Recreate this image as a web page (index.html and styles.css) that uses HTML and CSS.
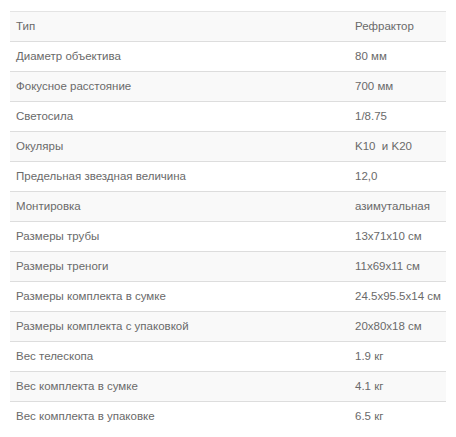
FILE: index.html
```html
<!DOCTYPE html>
<html lang="ru">
<head>
<meta charset="utf-8">
<link rel="stylesheet" href="styles.css">
</head>
<body>
<table class="specs">
<tbody>
<tr><td class="name">Тип</td><td class="val">Рефрактор</td></tr>
<tr><td class="name">Диаметр объектива</td><td class="val">80 мм</td></tr>
<tr><td class="name">Фокусное расстояние</td><td class="val">700 мм</td></tr>
<tr><td class="name">Светосила</td><td class="val">1/8.75</td></tr>
<tr><td class="name">Окуляры</td><td class="val">K10&nbsp; и K20</td></tr>
<tr><td class="name">Предельная звездная величина</td><td class="val">12,0</td></tr>
<tr><td class="name">Монтировка</td><td class="val">азимутальная</td></tr>
<tr><td class="name">Размеры трубы</td><td class="val">13x71x10 см</td></tr>
<tr><td class="name">Размеры треноги</td><td class="val">11x69x11 см</td></tr>
<tr><td class="name">Размеры комплекта в сумке</td><td class="val">24.5x95.5x14 см</td></tr>
<tr><td class="name">Размеры комплекта с упаковкой</td><td class="val">20x80x18 см</td></tr>
<tr><td class="name">Вес телескопа</td><td class="val">1.9 кг</td></tr>
<tr><td class="name">Вес комплекта в сумке</td><td class="val">4.1 кг</td></tr>
<tr><td class="name">Вес комплекта в упаковке</td><td class="val">6.5 кг</td></tr>
</tbody>
</table>
</body>
</html>
```
FILE: styles.css
```css
html, body {
  margin: 0;
  padding: 0;
  background: #fff;
}
body {
  padding: 11px 10px 0 10px;
  font-family: "Liberation Sans", Arial, sans-serif;
  font-size: 11.5px;
  color: #6a6a6a;
}
.specs {
  width: 436px;
  border-collapse: collapse;
  border-spacing: 0;
  table-layout: fixed;
}
.specs td {
  border-top: 1px solid #ddd;
  padding: 5px 6px;
  line-height: 19px;
  height: 19px;
  vertical-align: middle;
  text-align: left;
  white-space: nowrap;
}
.specs tr:first-child td {
  border-top: 1px solid #e4e4e4;
}
.specs tr:nth-child(odd) td {
  background: #f9f9f9;
}
.specs .name {
  width: 327px;
}
```
